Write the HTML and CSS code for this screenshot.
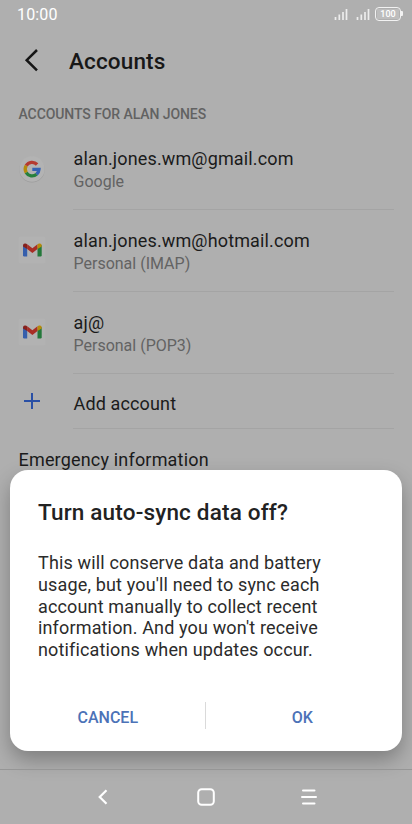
FILE: index.html
```html
<!DOCTYPE html>
<html lang="en">
<head>
<meta charset="utf-8">
<title>Accounts</title>
<link rel="stylesheet" href="styles.css">
</head>
<body>
<svg width="0" height="0" class="defs">
  <symbol id="gmail" viewBox="0 0 28 28">
    <rect x="0.5" y="0.5" width="27" height="27" rx="2.5" fill="#b2b2b2"/>
    <path d="M5 9v10.2q0 1.2 1.2 1.2h3V11.500z" fill="#365fac"/>
    <path d="M19.500 11.500v8.900h3q1.200 0 1.200-1.200V9z" fill="#23783a"/>
    <path d="M9.200 8.200l5.200 4 5.100-4v4.900l-5.100 3.900-5.200-3.900z" fill="#a82d25"/>
    <path d="M5 9.700q0-2.600 2.400-2.200 1 .2 1.800.9v4.700L5 10.400z" fill="#86201c"/>
    <path d="M23.700 9.700q0-2.600-2.400-2.200-1 .2-1.800.9v4.700l4.200-2.700z" fill="#b68a09"/>
  </symbol>
  <symbol id="signal" viewBox="0 0 14 13">
    <path d="M1.500 9v3M5.300 6.500V12M9 4v8M12.500 1v11" fill="none" stroke="#ededed" stroke-width="1.700"/>
  </symbol>
</svg>
<div class="screen">
  <header class="status">
    <span class="clock">10:00</span>
    <svg class="signal" width="14" height="13"><use href="#signal"/></svg>
    <svg class="signal" width="14" height="13"><use href="#signal"/></svg>
    <span class="battery"><span class="level">100</span></span>
  </header>
  <div class="titlebar">
    <svg width="14" height="24" viewBox="0 0 14 24"><path d="M13 2L2.700 12.200 13 22.400" fill="none" stroke="#151515" stroke-width="2.500"/></svg>
    <h1>Accounts</h1>
  </div>
  <h2>ACCOUNTS FOR ALAN JONES</h2>
  <ul class="accounts">
    <li>
      <svg class="icon" width="28" height="28" viewBox="0 0 28 28">
        <circle cx="14" cy="14.700" r="12.700" fill="#9d9d9d"/>
        <circle cx="14" cy="14" r="12.700" fill="#b3b3b3"/>
        <g fill="none" stroke-width="3.300">
          <path d="M8.200 10.600A6.900 6.900 0 0 1 19.100 9.500" stroke="#b53a30"/>
          <path d="M8.200 17.600A6.900 6.900 0 0 1 8.200 10.600" stroke="#b58b0c"/>
          <path d="M18.600 19.300A6.900 6.900 0 0 1 8.200 17.600" stroke="#26803c"/>
          <path d="M14.300 14.300h6.700Q20.800 17.400 18.600 19.300" stroke="#3562b4"/>
        </g>
      </svg>
      <div class="text"><p class="name">alan.jones.wm@gmail.com</p><p class="kind">Google</p></div>
    </li>
    <li>
      <svg class="icon mail" width="28" height="28"><use href="#gmail"/></svg>
      <div class="text"><p class="name">alan.jones.wm@hotmail.com</p><p class="kind">Personal (IMAP)</p></div>
    </li>
    <li>
      <svg class="icon mail" width="28" height="28"><use href="#gmail"/></svg>
      <div class="text"><p class="name">aj@</p><p class="kind">Personal (POP3)</p></div>
    </li>
    <li class="add">
      <svg class="icon mail" width="28" height="28" viewBox="0 0 28 28"><path d="M14 6v16M6 14h16" stroke="#294fa5" stroke-width="2"/></svg>
      <div class="text"><p class="name">Add account</p></div>
    </li>
  </ul>
  <p class="emergency">Emergency information</p>
  <section class="dialog">
    <h3>Turn auto-sync data off?</h3>
    <p class="message">This will conserve data and battery<br>usage, but you'll need to sync each<br>account manually to collect recent<br>information. And you won't receive<br>notifications when updates occur.</p>
    <div class="actions"><button>CANCEL</button><i></i><button>OK</button></div>
  </section>
  <nav>
    <svg width="12" height="18" viewBox="0 0 12 18"><path d="M9.500 2.200L2.700 9l6.800 6.800" fill="none" stroke="#fff" stroke-width="2.200"/></svg>
    <svg width="18" height="18" viewBox="0 0 18 18"><rect x="1.200" y="1.200" width="15.600" height="15.600" rx="3.500" fill="none" stroke="#fff" stroke-width="2"/></svg>
    <svg width="18" height="18" viewBox="0 0 18 18"><path d="M3 2.500h11.500M2 9h14M3 15.500h11.500" fill="none" stroke="#fff" stroke-width="2" stroke-linecap="round"/></svg>
  </nav>
</div>
</body>
</html>
```
FILE: styles.css
```css
* { box-sizing: border-box; margin: 0; padding: 0; }
body { font-family: Roboto, "Liberation Sans", sans-serif; background: #afafaf; }
.defs { position: absolute; }
.screen { position: relative; width: 412px; height: 824px; overflow: hidden; background: #afafaf; color: #1b1b1b; }
.status { display: flex; align-items: center; height: 30px; padding: 0 9px 0 17px; color: #fff; }
.clock { flex: 1; margin-top: -1px; font-size: 16px; letter-spacing: 0.150px; }
.signal { margin: -2px 8px 0 0; }
.battery { position: relative; display: flex; width: 26px; height: 14px; margin: -2px 2px 0 -3px; padding: 1px; border: 1.5px solid #f2f2f2; border-radius: 4px; }
.battery::after { content: ""; position: absolute; right: -3px; top: 3px; width: 2px; height: 5px; background: #f2f2f2; border-radius: 0 1px 1px 0; }
.level { flex: 1; background: #bdbdbd; font-size: 9px; line-height: 10px; text-align: center; font-weight: 500; }
.titlebar { display: flex; align-items: center; height: 62px; padding: 0 24px; gap: 31px; }
h1 { font-size: 22.500px; font-weight: 500; line-height: 30px; color: #181818; letter-spacing: 0.150px; }
.titlebar svg { margin-top: -3px; }
h2 { height: 36px; padding: 12px 18.500px 0; font-size: 14px; line-height: 20px; font-weight: 500; color: #626262; white-space: nowrap; letter-spacing: -0.080px; }
.accounts { list-style: none; }
.accounts li { display: flex; align-items: center; height: 82px; padding: 0 18px; gap: 27px; }
.accounts li .text { flex: 1; height: 100%; border-bottom: 1px solid #a4a4a4; }
.mail { margin-top: -2px; }
.text { padding: 19px 0 0 0.500px; }
.name { font-size: 18px; line-height: 24px; letter-spacing: 0.140px; }
.kind { font-size: 16px; line-height: 22px; color: #636363; }
.accounts .add { height: 55px; }
.add .text { padding-top: 18px; }
.emergency { padding: 19px 18.500px 0; font-size: 18px; line-height: 24px; letter-spacing: 0.180px; }
.dialog { position: absolute; left: 10px; top: 470px; width: 392px; height: 281px; padding: 28px; background: #fff; border-radius: 18px; box-shadow: 0 9px 20px rgba(0,0,0,.28); }
h3 { font-size: 22.500px; line-height: 29px; font-weight: 500; color: #222; letter-spacing: 0.180px; }
.message { margin-top: 25px; font-size: 18px; line-height: 21.800px; color: #2b2b2b; white-space: nowrap; letter-spacing: 0.150px; }
.actions { display: flex; align-items: center; height: 28px; margin: 41px -25px 0 -27px; }
button { flex: 1; padding-top: 3px; border: 0; background: none; font: 500 16px Roboto, sans-serif; color: #4c72b7; }
.actions i { width: 1px; height: 27px; background: #dadada; }
nav { position: absolute; left: 0; top: 769px; width: 412px; height: 55px; padding: 0 94px 1px 97px; display: flex; align-items: center; justify-content: space-between; border-top: 1px solid #969696; }
nav svg:nth-child(2) { margin-left: 2px; }
```
